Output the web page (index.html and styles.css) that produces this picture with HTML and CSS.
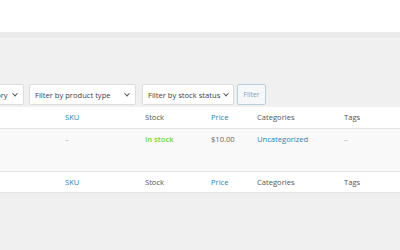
FILE: index.html
```html
<!DOCTYPE html>
<html lang="en">

<head>
    <meta charset="UTF-8">
    <meta name="viewport" content="width=device-width, initial-scale=1.0">
    <title>Products</title>
    <link rel="stylesheet" href="styles.css">
</head>

<body>
    <div class="top-bar"></div>
    <div class="wrap">
        <div class="filters">
            <div class="filter-select select-category">Filter by category <span class="chevron"></span></div>
            <div class="filter-select select-type">Filter by product type <span class="chevron"></span></div>
            <div class="filter-select select-stock">Filter by stock status <span class="chevron"></span></div>
            <button class="filter-button">Filter</button>
        </div>
        <table class="products-table">
            <colgroup>
                <col class="col-name">
                <col class="col-sku">
                <col class="col-stock">
                <col class="col-price">
                <col class="col-cats">
                <col class="col-tags">
            </colgroup>
            <thead>
                <tr>
                    <th></th>
                    <th class="sortable">SKU</th>
                    <th>Stock</th>
                    <th class="sortable">Price</th>
                    <th>Categories</th>
                    <th>Tags</th>
                </tr>
            </thead>
            <tbody>
                <tr class="product-row">
                    <td></td>
                    <td class="empty">–</td>
                    <td class="in-stock">In stock</td>
                    <td>$10.00</td>
                    <td><a href="#">Uncategorized</a></td>
                    <td class="empty">–</td>
                </tr>
            </tbody>
            <tfoot>
                <tr>
                    <th></th>
                    <th class="sortable">SKU</th>
                    <th>Stock</th>
                    <th class="sortable">Price</th>
                    <th>Categories</th>
                    <th>Tags</th>
                </tr>
            </tfoot>
        </table>
    </div>
</body>

</html>
```

FILE: styles.css
```css
* {
    margin: 0;
    padding: 0;
    box-sizing: border-box;
}

body {
    background: #f0f0f0;
    font-family: 'Open Sans', 'Noto Sans', sans-serif;
    font-size: 7.6px;
    color: #555;
    overflow: hidden;
}

.top-bar {
    height: 38px;
    background: #fff;
    border-bottom: 6px solid #ebebeb;
    box-shadow: 0 1px 0 #f3f3f3;
}

.wrap {
    padding-top: 46px;
}

.filters {
    display: flex;
    align-items: center;
    margin-left: -59px;
    height: 21px;
}

.filter-select {
    display: flex;
    align-items: center;
    justify-content: space-between;
    height: 21px;
    padding: 0 6px 0 5px;
    background: #fff;
    border: 1px solid #ddd;
    border-radius: 2px;
    color: #3c4146;
    white-space: nowrap;
}

.select-category {
    width: 83px;
    margin-right: 5px;
}

.select-type {
    width: 107px;
    margin-right: 6px;
}

.select-stock {
    width: 92px;
    margin-right: 3px;
    padding-right: 5px;
}

.chevron {
    flex: none;
    width: 4px;
    height: 4px;
    border-right: 1.2px solid #555;
    border-bottom: 1.2px solid #555;
    transform: rotate(45deg) translate(-1px, -1px);
}

.filter-button {
    height: 21px;
    width: 29px;
    font-family: inherit;
    font-size: 6.8px;
    color: #7aa3bb;
    background: #f5f7f8;
    border: 1px solid #b9d0dc;
    border-radius: 2px;
}

.products-table {
    margin-top: 2px;
    width: 420px;
    table-layout: fixed;
    border-collapse: collapse;
    background: #fff;
}

.col-name {
    width: 60px;
}

.col-sku {
    width: 80px;
}

.col-stock {
    width: 66px;
}

.col-price {
    width: 46px;
}

.col-cats {
    width: 87px;
}

.col-tags {
    width: 81px;
}

th,
td {
    text-align: left;
    font-weight: normal;
    padding: 0 0 0 5px;
    white-space: nowrap;
}

thead th,
tfoot th {
    height: 21px;
    color: #50555a;
}

thead tr {
    border-bottom: 1px solid #e5e5e5;
}

tfoot tr {
    border-top: 1px solid #e5e5e5;
    border-bottom: 1px solid #e5e5e5;
}

th.sortable {
    color: #2a84b0;
}

.product-row {
    background: #f9f9f9;
}

.product-row td {
    height: 43px;
    vertical-align: top;
    padding-top: 5px;
    color: #666;
}

.product-row td.empty {
    color: #aaa;
}

.product-row td.in-stock {
    color: #7ad03a;
    font-weight: 600;
}

.product-row a {
    color: #2a84b0;
    text-decoration: none;
}
```
